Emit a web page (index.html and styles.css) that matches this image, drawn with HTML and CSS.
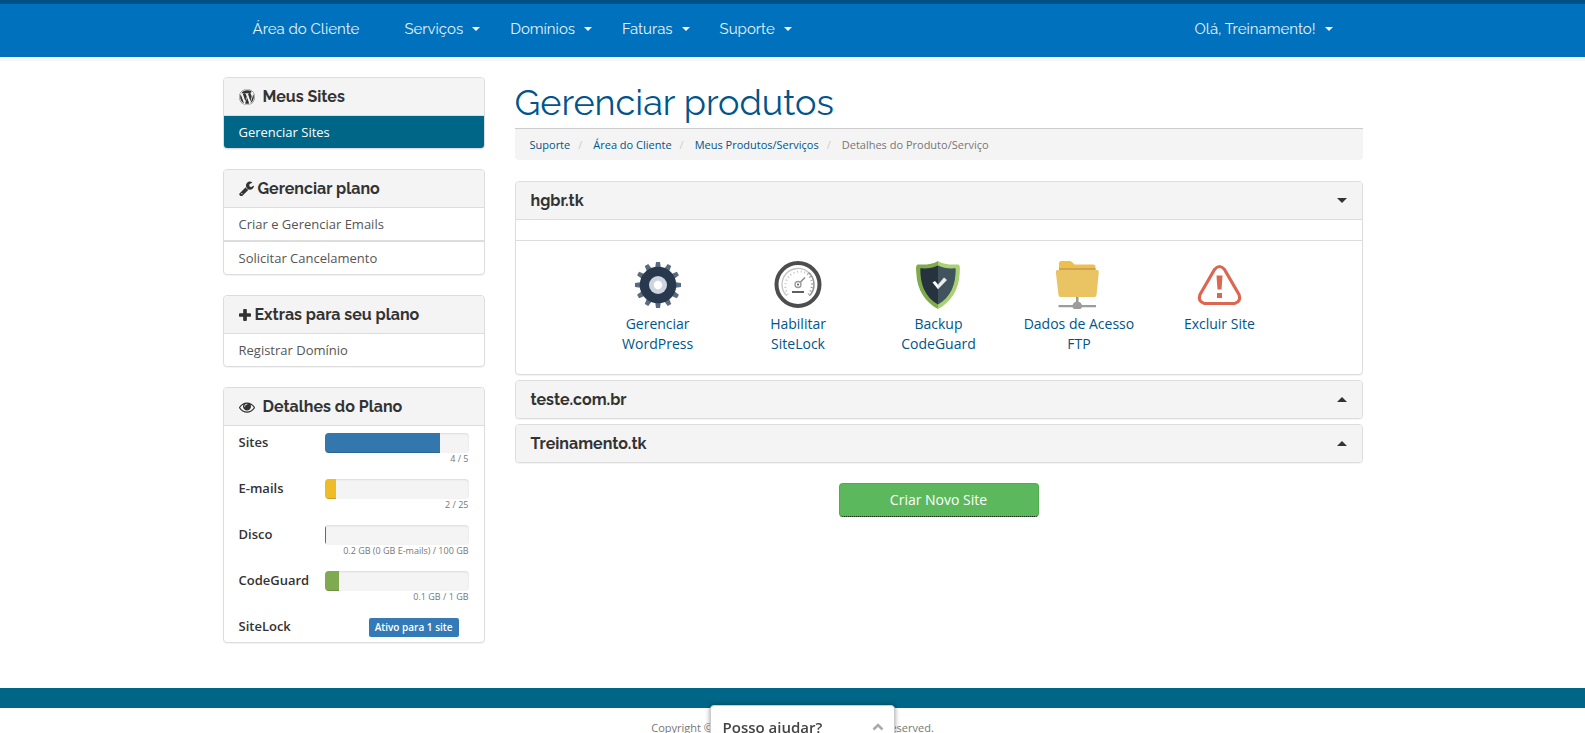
FILE: index.html
```html
<!DOCTYPE html>
<html lang="pt-BR">
<head>
<meta charset="utf-8">
<meta name="viewport" content="width=device-width, initial-scale=1">
<title>Gerenciar produtos</title>
<link rel="stylesheet" href="styles.css">
</head>
<body>
<header class="topbar">
  <nav class="container nav">
    <a class="nav-link nav-home" href="#">Área do Cliente</a>
    <a class="nav-link" href="#">Serviços<span class="caret"></span></a>
    <a class="nav-link" href="#">Domínios<span class="caret"></span></a>
    <a class="nav-link" href="#">Faturas<span class="caret"></span></a>
    <a class="nav-link" href="#">Suporte<span class="caret"></span></a>
    <a class="nav-link nav-user" href="#">Olá, Treinamento!<span class="caret"></span></a>
  </nav>
</header>

<div class="container layout">
  <aside class="sidebar">
    <section class="panel">
      <h2 class="panel-heading icon-wide">
        <svg class="icon" viewBox="0 0 1792 1792" fill="currentColor"><path d="M127 896q0-163 67-313l367 1005q-196-95-315-281T127 896zm1288-39q0 19-2.500 38.500t-10 49.500-11.500 44-17.500 59-17.500 58l-76 256-278-826q46-3 88-8 19-2 26-18.500t-2.500-31-28.500-13.500l-205 10q-75-1-202-10-12-1-20.500 5t-11.500 15-1.500 18.500 9 16.500 19.500 8l80 8 120 328-168 504-280-832q46-3 88-8 19-2 26-18.500t-2.500-31-28.500-13.500l-205 10q-7 0-23-.5t-26-.5q105-160 274.500-253.500T896 128q153 0 293 53t248 151q-2 0-4-.5t-3-.5q-59 0-98 42.500t-39 101.500q0 29 9 58t24 56 29 49q11 16 18 29t17 34 14 46 4 52zm-506 106l237 647q1 6 5 11-126 44-255 44-112 0-217-32zm661-436q95 174 95 369 0 209-104 385.500T1282 1561l235-678q59-169 59-276 0-42-6-79zM896 0q182 0 348 71t286 191 191 286 71 348-71 348-191 286-286 191-348 71-348-71-286-191-191-286T0 896t71-348 191-286T548 71 896 0zm0 1751q173 0 331.500-68t273-182.500 182.500-273T1751 896t-68-331.500-182.500-273-273-182.500T896 41t-331.500 68-273 182.500T109 564.500 41 896t68 331.500 182.500 273 273 182.500 331.500 68z"/></svg>
        Meus Sites
      </h2>
      <a class="list-item active" href="#">Gerenciar Sites</a>
    </section>

    <section class="panel">
      <h2 class="panel-heading">
        <svg class="icon icon-wrench" viewBox="64 64 1664 1664" fill="currentColor"><path d="M448 1472q0-26-19-45t-45-19-45 19-19 45 19 45 45 19 45-19 19-45zm644-420l-682 682q-37 37-90 37-52 0-91-37L123 1626q-38-36-38-90 0-53 38-91l681-681q39 98 114.500 173.500T1092 1052zm634-435q0 39-23 106-47 134-164.500 217.500T1280 1024q-185 0-316.500-131.500T832 576t131.500-316.500T1280 128q58 0 121.500 16.500T1509 191q16 11 16 28t-16 28l-293 169v224l193 107q5-3 79-48.500t135.500-81T1694 582q15 0 23.500 10t8.500 25z"/></svg>
        Gerenciar plano
      </h2>
      <a class="list-item" href="#">Criar e Gerenciar Emails</a>
      <a class="list-item" href="#">Solicitar Cancelamento</a>
    </section>

    <section class="panel">
      <h2 class="panel-heading">
        <svg class="icon icon-plus" viewBox="0 0 13 13" fill="currentColor"><path d="M5.500 0h2q1 0 1 1v3.500H12q1 0 1 1v2q0 1-1 1H8.500V12q0 1-1 1h-2q-1 0-1-1V8.500H1q-1 0-1-1v-2q0-1 1-1h3.500V1q0-1 1-1z"/></svg>
        Extras para seu plano
      </h2>
      <a class="list-item" href="#">Registrar Domínio</a>
    </section>

    <section class="panel">
      <h2 class="panel-heading icon-wide">
        <svg class="icon" viewBox="0 0 1792 1792" fill="currentColor"><path d="M1664 960q-152-236-381-353 61 104 61 225 0 185-131.500 316.500T896 1280t-316.500-131.500T448 832q0-121 61-225-229 117-381 353 133 205 333.500 326.500T896 1408t434.500-121.500T1664 960zM944 576q0-20-14-34t-34-14q-125 0-214.500 89.500T592 832q0 20 14 34t34 14 34-14 14-34q0-86 61-147t147-61q20 0 34-14t14-34zm848 384q0 34-20 69-140 230-376.500 368.500T896 1536t-499.500-139T20 1029Q0 994 0 960t20-69q140-229 376.500-368T896 384t499.500 139T1772 891q20 35 20 69z"/></svg>
        Detalhes do Plano
      </h2>
      <dl class="usage">
        <div class="usage-row"><dt>Sites</dt><dd><div class="bar"><div class="fill blue" style="width:80%"></div></div><small>4 / 5</small></dd></div>
        <div class="usage-row"><dt>E-mails</dt><dd><div class="bar"><div class="fill yellow" style="width:8%"></div></div><small>2 / 25</small></dd></div>
        <div class="usage-row"><dt>Disco</dt><dd><div class="bar"><div class="fill blue" style="width:1%"></div></div><small>0.2 GB (0 GB E-mails) / 100 GB</small></dd></div>
        <div class="usage-row"><dt>CodeGuard</dt><dd><div class="bar"><div class="fill green" style="width:10%"></div></div><small>0.1 GB / 1 GB</small></dd></div>
        <div class="usage-row usage-last"><dt>SiteLock</dt><dd><span class="badge">Ativo para 1 site</span></dd></div>
      </dl>
    </section>
  </aside>

  <main class="main">
    <h1 class="title">Gerenciar produtos</h1>
    <ol class="breadcrumb">
      <li><a href="#">Suporte</a></li>
      <li><a href="#">Área do Cliente</a></li>
      <li><a href="#">Meus Produtos/Serviços</a></li>
      <li>Detalhes do Produto/Serviço</li>
    </ol>

    <div class="sites">
      <section class="panel">
        <button class="panel-heading site-toggle" type="button" aria-expanded="true">hgbr.tk<span class="arrow down"></span></button>
        <div class="strip"></div>
        <div class="actions">
          <a class="action" href="#">
            <svg class="action-icon" viewBox="0 0 48 48">
              <g fill="#5b6b7f">
                <path id="tooth" d="M21 8 22 1h4l1 7v32l-1 7h-4l-1-7z"/>
                <use href="#tooth" transform="rotate(30 24 24)"/><use href="#tooth" transform="rotate(60 24 24)"/><use href="#tooth" transform="rotate(90 24 24)"/><use href="#tooth" transform="rotate(120 24 24)"/><use href="#tooth" transform="rotate(150 24 24)"/>
              </g>
              <circle cx="24" cy="24" r="18.300" fill="#28394d"/><circle cx="24" cy="24" r="9" fill="#ced5e0"/><circle cx="24" cy="24" r="4.200" fill="#fff"/>
            </svg>
            <span>Gerenciar WordPress</span>
          </a>
          <a class="action" href="#">
            <svg class="action-icon" viewBox="0 0 48 48" fill="none">
              <circle cx="24" cy="23.500" r="21.500" stroke="#4d4d4d" stroke-width="4"/>
              <path d="M12.700 34.800A16 16 0 0 1 34.500 11.400" stroke="#c4c4c4" stroke-width="1.300"/>
              <path d="M14 33.500A14.500 14.500 0 0 1 33.500 12.800" stroke="#c4c4c4" stroke-width="2" stroke-dasharray="1 2.600"/>
              <path d="M34.500 11.400A16 16 0 0 1 35.300 34.800" stroke="#969696" stroke-width="1.500"/>
              <path d="M33.500 12.800A14.500 14.500 0 0 1 34 33.500" stroke="#969696" stroke-width="2" stroke-dasharray="1 2.600"/>
              <path d="m26 21.500 5-5" stroke="#888" stroke-width="1.500"/>
              <circle cx="24" cy="23.500" r="3" stroke="#999" stroke-width="1.300"/><circle cx="24" cy="23.500" r="1" fill="#555"/>
              <path d="M18 31h12" stroke="#4d4d4d" stroke-width="1.800"/>
            </svg>
            <span>Habilitar SiteLock</span>
          </a>
          <a class="action" href="#">
            <svg class="action-icon" viewBox="0 0 48 48">
              <path d="M24 0c-5 3-11 4-20 3.500C1.500 4 2 8 2.300 12 3 29 11 41 24 48z" fill="#7fab4d"/>
              <path d="M24 0c5 3 11 4 20 3.500 2.500.5 2 4.500 1.700 8.500C45 29 37 41 24 48z" fill="#a9d173"/>
              <path d="M24 4.500C19 7 13.500 7.800 6.300 7.300 6.200 24 11 36 24 43.500z" fill="#26323d"/>
              <path d="M24 4.500c5 2.500 10.500 3.300 17.700 2.800C41.800 24 37 36 24 43.500z" fill="#41535d"/>
              <path d="m18.500 21.500 2.500-1.500 3 3.500v4.700z" fill="#fff"/><path d="m24 23.500 6-7 3 2.500-9 9.200z" fill="#e8ecef"/>
            </svg>
            <span>Backup CodeGuard</span>
          </a>
          <a class="action" href="#">
            <svg class="action-icon" viewBox="0 0 48 48">
              <path d="M4 9V2.500Q4 0 6.500 0h8Q16 0 17 1l2.500 2.500H38Q40.500 3.500 40.500 6v3z" fill="#ecc04a"/>
              <path d="M4 7h36.500v3H4z" fill="#d1a252"/>
              <path d="M2.500 9h39.500q2 0 1.800 2l-2.300 23q-.2 2-2 2h-34q-1.800 0-2-2L.800 11Q.700 9 2.500 9z" fill="#eac363"/>
              <path d="M21 36h2.500v4.500q3 1 3.500 3.500h14v2.200H27q-.5 1.800-2 1.800h-5.500q-1.500 0-2-1.800H3.500V44h14q.5-2.500 3.500-3.500z" fill="#9a9d9c"/>
            </svg>
            <span>Dados de Acesso FTP</span>
          </a>
          <a class="action" href="#">
            <svg class="action-icon" viewBox="0 0 48 48">
              <path d="M19.500 8.500q5-6 10 0L44 33.500q2.500 7-4.500 9h-30q-7-2-4.500-9z" fill="none" stroke="#dd6650" stroke-width="3.200" stroke-linejoin="round"/>
              <path d="M21.500 14.500h6l-1 14h-4zM22 32h5v5h-5z" fill="#dd6650"/>
            </svg>
            <span>Excluir Site</span>
          </a>
        </div>
      </section>
      <section class="panel"><button class="panel-heading site-toggle" type="button" aria-expanded="false">teste.com.br<span class="arrow up"></span></button></section>
      <section class="panel"><button class="panel-heading site-toggle" type="button" aria-expanded="false">Treinamento.tk<span class="arrow up"></span></button></section>
    </div>
    <button class="create" type="button">Criar Novo Site</button>
  </main>
</div>

<footer class="footer">Copyright © 2017 HostGator Brasil. All Rights Reserved.</footer>

<button class="help" type="button">Posso ajudar?
  <svg class="chevron" viewBox="0 0 12 8"><path d="m1.500 6.500 4.500-4.500 4.500 4.500" fill="none" stroke="#aaa" stroke-width="2.500"/></svg>
</button>
</body>
</html>
```
FILE: styles.css
```css
* { box-sizing: border-box; }

body {
  margin: 0;
  background: #fff;
  color: #333;
  font: 14px/20px "Open Sans", "Noto Sans", sans-serif;
}

a { color: #00558a; text-decoration: none; }
button { font: inherit; cursor: pointer; }
h1, h2, ol, dl, dd { margin: 0; padding: 0; }

.container {
  width: 100%;
  max-width: 1170px;
  margin: 0 auto;
  padding: 0 15px;
}

.topbar {
  background: #0071bc;
  border-top: 4px solid #004f85;
  box-shadow: 0 4px 0 #f6f6f9;
}

.nav {
  display: flex;
  align-items: center;
  height: 53px;
  padding: 0 45px 4px;
}

.nav-link {
  display: flex;
  align-items: center;
  gap: 9px;
  margin-right: 30px;
  color: #e6f3fb;
  font: 15px/20px Raleway, Lato, sans-serif;
}
.nav-home { margin-right: 45px; }
.nav-user { margin: 0 0 0 auto; }

.caret {
  border: 4px solid transparent;
  border-top-color: #fff;
  border-bottom: 0;
}

.layout {
  display: grid;
  grid-template-columns: 262px minmax(0, 1fr);
  gap: 30px;
  padding-top: 20px;
  padding-bottom: 45px;
}

.sidebar { display: flex; flex-direction: column; gap: 20px; }

.panel {
  overflow: hidden;
  border: 1px solid #ddd;
  border-radius: 4px;
  background: #fff;
  box-shadow: 0 1px 1px rgba(0, 0, 0, .05);
}

.panel-heading {
  display: flex;
  align-items: center;
  gap: 4px;
  height: 37px;
  padding: 0 15px;
  background: #f4f4f4;
  color: #333;
  font: bold 16px/20px Raleway, Lato, sans-serif;
}
.icon-wide { gap: 8px; }
.icon { width: 16px; height: 16px; }
.icon-wrench { width: 15px; height: 15px; }
.icon-plus { width: 12px; height: 12px; }

.list-item {
  display: block;
  border-top: 1px solid #ddd;
  padding: 6px 15px;
  color: #555;
  font-size: 13px;
}
.list-item + .list-item { border-top-width: 2px; }
.list-item.active { background: #006687; color: #fff; }

.usage {
  border-top: 1px solid #ddd;
  padding: 7px 15px 5px;
}
.usage-row {
  display: grid;
  grid-template-columns: 86px 1fr;
  height: 46px;
}
.usage-row dt { font-size: 13px; font-weight: 600; line-height: 18px; }
.usage-row small {
  display: block;
  color: #777;
  font-size: 9px;
  line-height: 12px;
  text-align: right;
}
.usage-last { height: 20px; }
.usage-last dd { padding-right: 10px; line-height: 18px; text-align: right; }

.bar {
  height: 20px;
  overflow: hidden;
  border-radius: 4px;
  background: #f4f4f4;
  box-shadow: inset 0 1px 2px rgba(0, 0, 0, .1);
}
.fill { height: 100%; box-shadow: inset 0 -1px 0 rgba(0, 0, 0, .15); }
.blue { background: #3477ad; }
.yellow { background: #f0bc25; }
.green { background: #80aa50; }

.badge {
  display: inline-block;
  padding: 0 6px;
  border-radius: 2px;
  background: #337ab7;
  color: #fff;
  font-size: 10px;
  font-weight: 600;
  line-height: 19px;
}

.title {
  padding: 5px 0 6px;
  border-bottom: 1px solid #ccc;
  color: #00558a;
  font: 400 36px/40px Raleway, Lato, sans-serif;
}

.breadcrumb {
  display: flex;
  padding: 6px 15px 5px;
  border-radius: 0 0 4px 4px;
  background: #f4f4f4;
  color: #777;
  font-size: 11px;
  list-style: none;
}
.breadcrumb li + li::before { content: "/"; padding: 0 11px 0 8px; color: #ccc; }

.sites { display: flex; flex-direction: column; gap: 5px; margin-top: 21px; }

.site-toggle { width: 100%; border: 0; justify-content: space-between; }
.arrow { border: 5px solid transparent; }
.down { border-top-color: #333; border-bottom: 0; }
.up { border-bottom-color: #333; border-top: 0; }

.strip {
  height: 22px;
  border-top: 1px solid #ddd;
  border-bottom: 1px solid #ddd;
}

.actions {
  display: grid;
  grid-template-columns: repeat(5, 1fr);
  width: 83%;
  margin: 0 auto;
  padding: 20px 0;
}

.action {
  display: flex;
  flex-direction: column;
  align-items: center;
  gap: 5px;
  min-height: 93px;
  text-align: center;
}
.action span { max-width: 112px; }
.action-icon { width: 48px; height: 48px; }

.create {
  display: block;
  width: 200px;
  height: 34px;
  margin: 20px auto 0;
  border: 1px solid #4cae4c;
  border-bottom: 1px dotted #000;
  border-radius: 4px;
  background: #5cb85c;
  color: #fff;
}

.footer {
  border-top: 20px solid #006687;
  padding: 10px 15px 20px;
  color: #777;
  font-size: 11px;
  text-align: center;
}

.help {
  position: fixed;
  bottom: -16px;
  left: 50%;
  display: flex;
  align-items: center;
  justify-content: space-between;
  width: 185px;
  height: 44px;
  margin-left: -83px;
  padding: 0 10px 0 12px;
  border: 1px solid #ccc;
  border-radius: 4px 4px 0 0;
  background: #fff;
  box-shadow: 0 0 5px rgba(0, 0, 0, .4);
  color: #444;
  font-size: 15px;
  font-weight: 600;
}
.chevron { width: 12px; height: 8px; }
```
